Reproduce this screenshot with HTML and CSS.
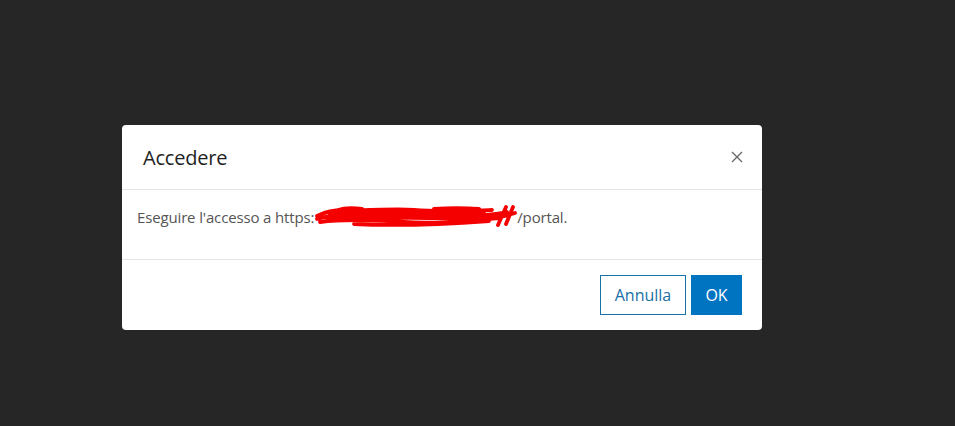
FILE: index.html
```html
<!DOCTYPE html>
<html lang="it">
<head>
<meta charset="utf-8">
<title>Accedere</title>
<link rel="stylesheet" href="styles.css">
</head>
<body>
<div class="overlay">
  <div class="modal">
    <div class="modal-header">
      <h4 class="modal-title">Accedere</h4>
      <button class="close" aria-label="Chiudi">
        <svg width="12" height="12" viewBox="0 0 12 12"><path d="M1 1L11 11M11 1L1 11" stroke="#666" stroke-width="1.3" fill="none"/></svg>
      </button>
    </div>
    <div class="modal-body">
      <p class="msg">Eseguire l'accesso a https:<span class="redact"><svg width="203" height="26" viewBox="0 0 203 26"><path d="M3 12 C12 7 25 5 40 6 C60 7 80 4 100 6 C125 8 150 7 178 6 M3 15 C20 10 45 9 70 10 C95 12 115 10 140 11 C160 12 178 11 193 8 M6 18 C30 15 60 16 90 18 C120 20 150 17 186 14 M10 13 C40 14 80 13 120 14 C150 15 170 13 196 10 M15 9 C45 10 75 7 105 9 C130 10 150 8 170 9 M40 20 C80 22 120 21 175 17 M24 6 C30 4 40 4 48 5 M120 5 C135 4 150 4 165 5 M192 3 L184 21 M199 3 L192 20 M187 13 L201 9" stroke="#f40000" stroke-width="3.8" fill="none" stroke-linecap="round"/></svg></span>/portal.</p>
    </div>
    <div class="modal-footer">
      <button class="btn btn-outline">Annulla</button>
      <button class="btn btn-primary">OK</button>
    </div>
  </div>
</div>
</body>
</html>
```
FILE: styles.css
```css
html, body {
  margin: 0;
  padding: 0;
  background: #262626;
  font-family: "Open Sans", "Liberation Sans", sans-serif;
}
.overlay {
  width: 955px;
  height: 426px;
  padding-top: 125px;
  padding-left: 122px;
  box-sizing: border-box;
}
.modal {
  width: 640px;
  background: #fff;
  border-radius: 4px;
}
.modal-header {
  height: 65px;
  box-sizing: border-box;
  border-bottom: 1px solid #e5e5e5;
  display: flex;
  align-items: center;
  justify-content: space-between;
  padding: 0 19px 0 21px;
}
.modal-title {
  margin: 0;
  font-size: 20px;
  font-weight: 400;
  color: #1f1f1f;
  letter-spacing: -0.2px;
}
.close {
  border: 0;
  background: none;
  padding: 0;
  width: 12px;
  height: 12px;
  display: flex;
}
.modal-body {
  height: 70px;
  box-sizing: border-box;
  border-bottom: 1px solid #e5e5e5;
  padding: 14px 15px 0;
}
.msg {
  margin: 0;
  font-size: 15px;
  color: #555;
  display: flex;
  align-items: center;
  height: 26px;
  letter-spacing: -0.15px;
}
.redact {
  display: inline-flex;
  width: 203px;
  height: 26px;
}
.modal-footer {
  height: 70px;
  box-sizing: border-box;
  display: flex;
  justify-content: flex-end;
  align-items: flex-start;
  gap: 5px;
  padding: 15px 20px 0;
}
.btn {
  height: 40px;
  box-sizing: border-box;
  font-family: inherit;
  font-size: 16px;
  border-radius: 0;
  padding: 0;
  cursor: pointer;
}
.btn-outline {
  width: 86px;
  background: #fff;
  color: #1a6fa3;
  border: 1px solid #1a73a8;
}
.btn-primary {
  width: 51px;
  background: #0074c1;
  color: #fff;
  border: 1px solid #0074c1;
}
```
